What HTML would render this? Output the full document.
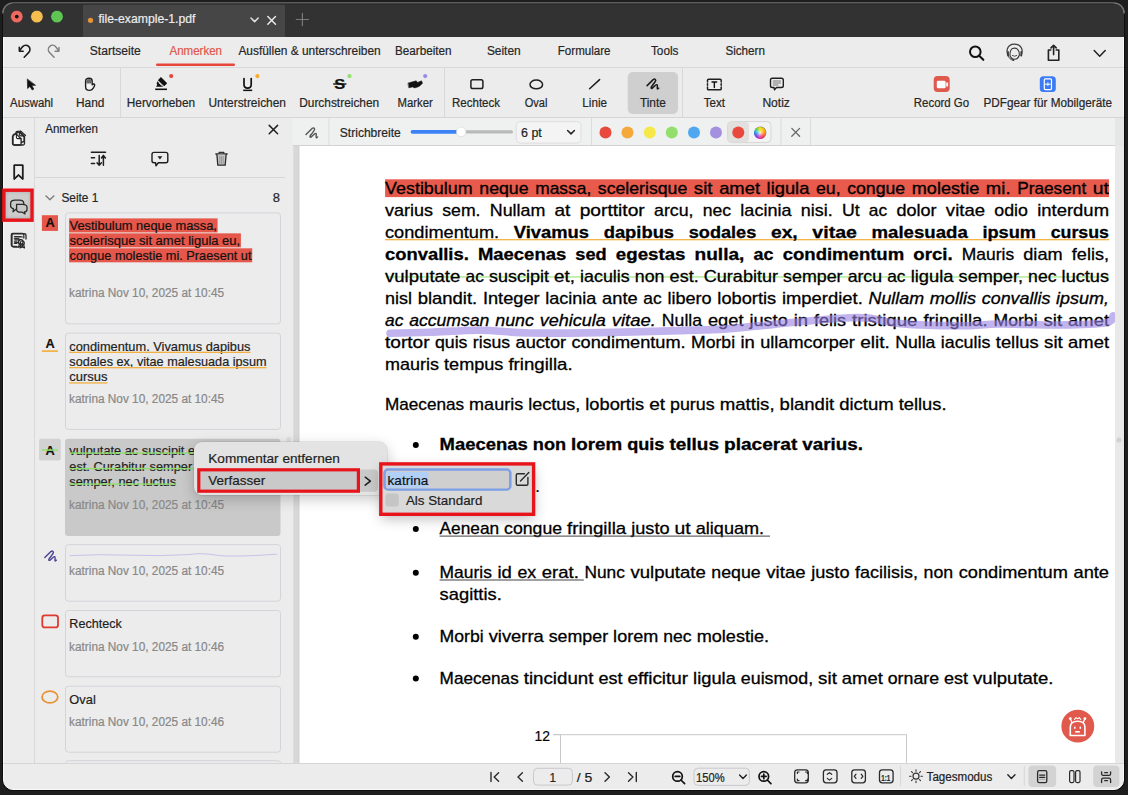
<!DOCTYPE html>
<html><head><meta charset="utf-8">
<style>
*{margin:0;padding:0;box-sizing:border-box}
html,body{width:1128px;height:795px;overflow:hidden;background:#1e1e1e;position:relative}
.L{position:absolute;left:0;top:0;overflow:visible}
text{font-family:"Liberation Sans",sans-serif;white-space:pre}
.d{position:absolute}
</style></head><body>
<svg class="L" width="1128" height="795" viewBox="0 0 1128 795"><rect x="0" y="0" width="1128" height="795" fill="#1e1e1e" /><rect x="2" y="2" width="1123" height="789" fill="#0e0e0e" rx="11" /><rect x="3.5" y="3.5" width="1120" height="786" fill="#ececec" rx="9.5" stroke="#f8f8f8" stroke-width="1" /><path d="M3 37 V13 A10 10 0 0 1 13 3 H1114 A10 10 0 0 1 1124 13 V37 Z" fill="#323232" /><path d="M2.8 13 A10.2 10.2 0 0 1 13 2.8 H1114 A10.2 10.2 0 0 1 1124.2 13" fill="none" stroke="#767676" stroke-width="1.3" stroke-linecap="round" stroke-linejoin="round" /><rect x="83" y="3.5" width="202" height="33.5" fill="#464646" /><circle cx="16.8" cy="16.6" r="6.3" fill="#ee6a5f" stroke="#252a30" stroke-width="0.7"/><circle cx="16.8" cy="16.6" r="1.9" fill="#161616"/><circle cx="36.9" cy="16.6" r="6.3" fill="#f4bf4f" stroke="#252a30" stroke-width="0.7"/><circle cx="57.0" cy="16.6" r="6.3" fill="#5fc454" stroke="#252a30" stroke-width="0.7"/><circle cx="90.5" cy="20.3" r="2.6" fill="#e8943a"/><text x="98.4" y="23.3" font-size="12.2" fill="#ececec" textLength="97" lengthAdjust="spacingAndGlyphs" stroke="#ececec" stroke-width="0.2" >file-example-1.pdf</text><path d="M251 18 L254.6 21.6 L258.2 18" fill="none" stroke="#e0e0e0" stroke-width="1.5" stroke-linecap="round" stroke-linejoin="round" /><path d="M267.8 16.5 L275.5 24.2 M275.5 16.5 L267.8 24.2" fill="none" stroke="#efefef" stroke-width="1.4" stroke-linecap="round" stroke-linejoin="round" /><path d="M302.4 13.4 V25.6 M296.3 19.5 H308.5" fill="none" stroke="#7a7a7a" stroke-width="1.2" stroke-linecap="round" stroke-linejoin="round" /><rect x="12" y="3.6" width="1102" height="0.9" fill="#242424" /><rect x="3" y="67" width="1121" height="1" fill="#d8d8d8" /><text x="89.8" y="55" font-size="12" fill="#262626" textLength="51" lengthAdjust="spacingAndGlyphs" stroke="#262626" stroke-width="0.2" >Startseite</text><text x="169.5" y="55" font-size="12" fill="#e0564a" textLength="52.5" lengthAdjust="spacingAndGlyphs" stroke="#e0564a" stroke-width="0.2" >Anmerken</text><rect x="156" y="63.5" width="79" height="2.4" fill="#e8453c" rx="1.2" /><text x="238.4" y="55" font-size="12" fill="#262626" textLength="142.3" lengthAdjust="spacingAndGlyphs" stroke="#262626" stroke-width="0.2" >Ausfüllen &amp; unterschreiben</text><text x="395" y="55" font-size="12" fill="#262626" textLength="56.6" lengthAdjust="spacingAndGlyphs" stroke="#262626" stroke-width="0.2" >Bearbeiten</text><text x="486.9" y="55" font-size="12" fill="#262626" textLength="33.8" lengthAdjust="spacingAndGlyphs" stroke="#262626" stroke-width="0.2" >Seiten</text><text x="557.8" y="55" font-size="12" fill="#262626" textLength="52.7" lengthAdjust="spacingAndGlyphs" stroke="#262626" stroke-width="0.2" >Formulare</text><text x="651" y="55" font-size="12" fill="#262626" textLength="27.4" lengthAdjust="spacingAndGlyphs" stroke="#262626" stroke-width="0.2" >Tools</text><text x="725.4" y="55" font-size="12" fill="#262626" textLength="39.6" lengthAdjust="spacingAndGlyphs" stroke="#262626" stroke-width="0.2" >Sichern</text><path d="M24.2 57.2 L28.8 52.4 A4.2 4.2 0 0 0 22.7 46.6 L19.9 50.2" fill="none" stroke="#1c1c1c" stroke-width="1.6" stroke-linecap="round" stroke-linejoin="round" /><path d="M19.3 47.4 L19.4 51.3 L23.2 51.2" fill="none" stroke="#1c1c1c" stroke-width="1.6" stroke-linecap="round" stroke-linejoin="round" /><path d="M54.1 57.2 L49.5 52.4 A4.2 4.2 0 0 1 55.6 46.6 L58.4 50.2" fill="none" stroke="#7d7d7d" stroke-width="1.4" stroke-linecap="round" stroke-linejoin="round" /><path d="M59 47.4 L58.9 51.3 L55.1 51.2" fill="none" stroke="#7d7d7d" stroke-width="1.4" stroke-linecap="round" stroke-linejoin="round" /><circle cx="975.3" cy="51.8" r="5.3" fill="none" stroke="#111" stroke-width="2"/><path d="M979.2 55.8 L983.3 59.8" fill="none" stroke="#111" stroke-width="2.1" stroke-linecap="round" stroke-linejoin="round" /><path d="M1008.2 55.5 Q1006.6 52.5 1007.2 49.5 Q1008.5 44.2 1014.6 44.2 Q1020.8 44.2 1022 49.5 Q1022.6 52.5 1021 55.5" fill="none" stroke="#3a3a3a" stroke-width="1.2" stroke-linecap="round" stroke-linejoin="round" /><path d="M1010 55.5 Q1009.8 50 1012.5 48.6 Q1015.5 47.5 1017.5 49.2 Q1019.5 50.8 1019.4 55 Q1018 59.3 1014.6 59.3 Q1011.3 59.3 1010 55.5 Z" fill="none" stroke="#3a3a3a" stroke-width="1.1" stroke-linecap="round" stroke-linejoin="round" /><path d="M1008 51.8 V55.6 M1021.3 51.8 V55.6" fill="none" stroke="#3a3a3a" stroke-width="1.8" stroke-linecap="round" stroke-linejoin="round" /><path d="M1008.4 55.6 Q1009 59.8 1013.5 60.2" fill="none" stroke="#3a3a3a" stroke-width="1" stroke-linecap="round" stroke-linejoin="round" /><circle cx="1013.4" cy="60.2" r="0.9" fill="#3a3a3a"/><path d="M1012.4 55.6 Q1014.6 57 1016.8 55.6" fill="none" stroke="#3a3a3a" stroke-width="0.9" stroke-linecap="round" stroke-linejoin="round" /><path d="M1050.8 50 H1048.4 V60.2 H1058.8 V50 H1056.2" fill="none" stroke="#222" stroke-width="1.6" stroke-linecap="round" stroke-linejoin="round" /><path d="M1053.6 54.6 V45.4 M1051 47.9 L1053.6 45.3 L1056.2 47.9" fill="none" stroke="#222" stroke-width="1.6" stroke-linecap="round" stroke-linejoin="round" /><path d="M1094.2 50.5 L1099.7 56.3 L1105.2 50.5" fill="none" stroke="#222" stroke-width="1.5" stroke-linecap="round" stroke-linejoin="round" /><rect x="3" y="117" width="1121" height="1" fill="#d6d6d6" /><rect x="120" y="68" width="1" height="49" fill="#d8d8d8" /><rect x="444" y="68" width="1" height="49" fill="#d8d8d8" /><rect x="682" y="68" width="1" height="49" fill="#d8d8d8" /><rect x="627.7" y="72" width="50.3" height="42" fill="#cfcfcf" rx="5" /><text x="10.1" y="107" font-size="12" fill="#262626" textLength="43" lengthAdjust="spacingAndGlyphs" stroke="#262626" stroke-width="0.2" >Auswahl</text><text x="76" y="107" font-size="12" fill="#262626" textLength="28.4" lengthAdjust="spacingAndGlyphs" stroke="#262626" stroke-width="0.2" >Hand</text><text x="126.8" y="107" font-size="12" fill="#262626" textLength="68.2" lengthAdjust="spacingAndGlyphs" stroke="#262626" stroke-width="0.2" >Hervorheben</text><text x="208.5" y="107" font-size="12" fill="#262626" textLength="77.5" lengthAdjust="spacingAndGlyphs" stroke="#262626" stroke-width="0.2" >Unterstreichen</text><text x="299.2" y="107" font-size="12" fill="#262626" textLength="80" lengthAdjust="spacingAndGlyphs" stroke="#262626" stroke-width="0.2" >Durchstreichen</text><text x="397.5" y="107" font-size="12" fill="#262626" textLength="35.3" lengthAdjust="spacingAndGlyphs" stroke="#262626" stroke-width="0.2" >Marker</text><text x="452" y="107" font-size="12" fill="#262626" textLength="48" lengthAdjust="spacingAndGlyphs" stroke="#262626" stroke-width="0.2" >Rechteck</text><text x="524.7" y="107" font-size="12" fill="#262626" textLength="22.7" lengthAdjust="spacingAndGlyphs" stroke="#262626" stroke-width="0.2" >Oval</text><text x="582.3" y="107" font-size="12" fill="#262626" textLength="24.7" lengthAdjust="spacingAndGlyphs" stroke="#262626" stroke-width="0.2" >Linie</text><text x="639.9" y="107" font-size="12" fill="#262626" textLength="26" lengthAdjust="spacingAndGlyphs" stroke="#262626" stroke-width="0.2" >Tinte</text><text x="703.7" y="107" font-size="12" fill="#262626" textLength="21.3" lengthAdjust="spacingAndGlyphs" stroke="#262626" stroke-width="0.2" >Text</text><text x="762.4" y="107" font-size="12" fill="#262626" textLength="27.5" lengthAdjust="spacingAndGlyphs" stroke="#262626" stroke-width="0.2" >Notiz</text><text x="913.8" y="107" font-size="12" fill="#262626" textLength="55.3" lengthAdjust="spacingAndGlyphs" stroke="#262626" stroke-width="0.2" >Record Go</text><text x="983.5" y="107" font-size="12" fill="#262626" textLength="128.5" lengthAdjust="spacingAndGlyphs" stroke="#262626" stroke-width="0.2" >PDFgear für Mobilgeräte</text><path d="M27.3 79.3 L27.6 88.6 L29.9 86.4 L32.2 90 L33.9 89 L31.7 85.5 L35.3 85.3 Z" fill="#111" stroke="#111" stroke-width="0.6" stroke-linecap="round" stroke-linejoin="round" /><path d="M85.6 85.5 V81.2 Q85.6 78.3 89.2 78.2 Q92.3 78.3 92.2 81.5 V84.9 Q93.3 83.5 94.4 84.2 Q95.1 85 94.3 86.3 Q92.5 90.4 89.3 90.4 Q85.6 90.4 85.6 86.5 Z" fill="#f4f4f4" stroke="#1f1f1f" stroke-width="1.4" stroke-linecap="round" stroke-linejoin="round" /><path d="M86.3 83.6 V81.3 Q86.3 78.9 89.2 78.9 Q91.6 78.9 91.6 81.4 V83.6 Z" fill="#6a6a6a" /><path d="M160.9 77.1 L167.2 83.2 L164.2 86.2 L157.9 80.2 Z" fill="#111" /><path d="M157.5 81.2 L163.2 86.4 L161.5 86.7 H156.1 L157.2 84.7 L156.6 83.5 Z" fill="#111" /><path d="M158.9 82.9 L161.4 85.3" fill="none" stroke="#e6e6e6" stroke-width="0.9" stroke-linecap="round" stroke-linejoin="round" /><rect x="155.2" y="88.5" width="11.8" height="1.6" fill="#111" /><circle cx="171.2" cy="76.1" r="2.1" fill="#e8493f"/><path d="M244 78.6 V84.6 Q244 88.2 247.6 88.2 Q251.2 88.2 251.2 84.6 V78.6" fill="none" stroke="#111" stroke-width="1.7" stroke-linecap="round" stroke-linejoin="round" /><rect x="243.2" y="89.6" width="9" height="1.5" fill="#111" /><circle cx="257.4" cy="76.1" r="2.1" fill="#f4ac2f"/><text x="334.2" y="89.2" font-size="15" fill="#111" textLength="11" lengthAdjust="spacingAndGlyphs" font-weight="bold" stroke="#111" stroke-width="0.2" >S</text><rect x="333.2" y="83.3" width="13.2" height="1.4" fill="#111" /><circle cx="349.5" cy="76.1" r="2.1" fill="#8ee16c"/><path d="M408.3 83 L416.2 80.8 L417.5 82.4 L421.5 80.8 L422.5 83.2 Q420.3 86 417.8 87 L414.4 87.9 L412.8 86.9 L409 87.7 Z" fill="#111" stroke="#111" stroke-width="0.5" stroke-linecap="round" stroke-linejoin="round" /><circle cx="425.2" cy="76.1" r="2.1" fill="#9e88ea"/><rect x="470.9" y="79.8" width="12" height="8.8" fill="none" rx="1.8" stroke="#1f1f1f" stroke-width="1.5" /><ellipse cx="536.3" cy="84.4" rx="6.3" ry="4.4" fill="none" stroke="#1f1f1f" stroke-width="1.5"/><path d="M589.6 88.8 L599.6 79.6" fill="none" stroke="#1f1f1f" stroke-width="1.5" stroke-linecap="round" stroke-linejoin="round" /><path transform="translate(647.1 79)" d="M0 6.6 L6.1 0.6 Q8.3 -0.8 8.6 1.4 Q8.5 2.5 4.7 7.2 Q3.1 9.6 4.9 9.4 L8.7 6 Q10.2 5 10.3 6.8 Q9.9 9.8 10.4 10 L11.6 9.2" fill="none" stroke="#1a1a1a" stroke-width="1.5" stroke-linecap="round" stroke-linejoin="round"/><path d="M707.5 82 V80.3 Q707.5 79.2 708.7 79.2 H720 Q721.2 79.2 721.2 80.3 V82 M707.5 87 V88.7 Q707.5 89.8 708.7 89.8 H720 Q721.2 89.8 721.2 88.7 V87" fill="none" stroke="#1f1f1f" stroke-width="1.5" stroke-linecap="round" stroke-linejoin="round" /><path d="M707.5 83.7 V85.3 M721.2 83.7 V85.3" fill="none" stroke="#1f1f1f" stroke-width="1.5" stroke-linecap="round" stroke-linejoin="round" /><path d="M712 82 H716.7 M714.35 82 V87.5" fill="none" stroke="#111" stroke-width="1.4" stroke-linecap="round" stroke-linejoin="round" /><path d="M772.3 78.3 H781.5 Q783.3 78.3 783.3 80.1 V85.7 Q783.3 87.5 781.5 87.5 H776.5 L774.5 89.8 L774 87.5 H772.3 Q770.5 87.5 770.5 85.7 V80.1 Q770.5 78.3 772.3 78.3 Z" fill="none" stroke="#1f1f1f" stroke-width="1.4" stroke-linecap="round" stroke-linejoin="round" /><path d="M773.3 81 H780.5 M773.3 83 H780.5 M773.3 85 H778" fill="none" stroke="#777" stroke-width="1.1" stroke-linecap="round" stroke-linejoin="round" /><rect x="933.7" y="76" width="16" height="16" fill="#e0594d" rx="4" /><rect x="936.8" y="80.8" width="8.8" height="7.4" fill="#fff" rx="1.3" /><rect x="946.2" y="82.4" width="1.9" height="4.2" fill="#fff" rx="0.5" /><rect x="1039.8" y="76.3" width="16" height="15.7" fill="#3b7cf4" rx="3.5" /><rect x="1044.3" y="78.8" width="7.2" height="10.8" fill="none" rx="1" stroke="#fff" stroke-width="1.2" /><path d="M1045.5 84.2 H1050.3 M1047.9 82.8 V85.6" fill="none" stroke="#fff" stroke-width="1" stroke-linecap="round" stroke-linejoin="round" /><rect x="34" y="118" width="1" height="645" fill="#d9d9d9" /><rect x="35" y="177" width="250" height="1" fill="#d6d6d6" /><rect x="293.6" y="118" width="5.7" height="645" fill="#d8d8d8" /><rect x="298.5" y="146" width="1" height="617" fill="#cdcdcd" /><path d="M15.9 135.5 V133 Q15.9 131.4 17.5 131.4 H19.3 L24.1 136.2 V140.4 Q24.1 142 22.5 142 H21.2" fill="none" stroke="#222" stroke-width="1.3" stroke-linecap="round" stroke-linejoin="round" /><path d="M19.3 131.6 V134.3 Q19.3 135.9 20.9 135.9 H23.8" fill="none" stroke="#222" stroke-width="1.1" stroke-linecap="round" stroke-linejoin="round" /><path d="M13 135.7 Q13 134.1 14.6 134.1 H16.4 L21.1 138.8 V143.4 Q21.1 145 19.5 145 H14.6 Q13 145 13 143.4 Z" fill="#f6f6f6" stroke="#222" stroke-width="1.3" stroke-linecap="round" stroke-linejoin="round" /><path d="M16.4 134.3 V137.2 Q16.4 138.6 17.9 138.6 H20.9" fill="none" stroke="#222" stroke-width="1.1" stroke-linecap="round" stroke-linejoin="round" /><path d="M14.3 165.3 H22.7 V179 L18.5 175 L14.3 179 Z" fill="none" stroke="#1e1e1e" stroke-width="1.5" stroke-linecap="round" stroke-linejoin="round" /><path d="M23.8 238 V234.8 Q23.8 233.4 22.4 233.4 H12.7 Q11.3 233.4 11.3 234.8 V245 Q11.3 246.4 12.7 246.4 H16.5" fill="none" stroke="#333" stroke-width="1.3" stroke-linecap="round" stroke-linejoin="round" /><path d="M14.3 236.5 H21 M14.3 238.6 H19 M14.3 241.2 H16.8 M14.3 243.4 H16.8" fill="none" stroke="#333" stroke-width="1.1" stroke-linecap="round" stroke-linejoin="round" /><circle cx="20.8" cy="241.9" r="2.3" fill="none" stroke="#222" stroke-width="1.3"/><path d="M19.4 244 L18.6 246.8 L20.8 246 L23 246.8 L22.2 244" fill="none" stroke="#222" stroke-width="1.1" stroke-linecap="round" stroke-linejoin="round" /><rect x="293.6" y="118" width="5.7" height="645" fill="#d8d8d8" /><rect x="298.5" y="146" width="1" height="617" fill="#cdcdcd" /><path d="M14.5 134.5 L18.5 131.5 L24.5 137 L24.5 143.5 Q24.5 145 23 145 H14 Q12.5 145 12.5 143.5 V136.5 Z" fill="none" stroke="#2a2a2a" stroke-width="1.3" stroke-linecap="round" stroke-linejoin="round" /><path d="M16 133.5 L20.5 131 L25.5 135.5" fill="none" stroke="#2a2a2a" stroke-width="1.3" stroke-linecap="round" stroke-linejoin="round" /><path d="M14.3 165.3 H22.7 V179 L18.5 175 L14.3 179 Z" fill="none" stroke="#1e1e1e" stroke-width="1.5" stroke-linecap="round" stroke-linejoin="round" /><path d="M244 0" fill="none" stroke="#000" stroke-width="1.5" stroke-linecap="round" stroke-linejoin="round" /><path d="M25 233.8 H13.5 Q12 233.8 12 235.3 V245.6 Q12 247 13.5 247 H19" fill="none" stroke="#2a2a2a" stroke-width="1.3" stroke-linecap="round" stroke-linejoin="round" /><path d="M25 233.8 Q26 233.8 26 235.3 V239" fill="none" stroke="#2a2a2a" stroke-width="1.3" stroke-linecap="round" stroke-linejoin="round" /><path d="M14.8 237 H22.5 M14.8 239.8 H20 M14.8 242.6 H18" fill="none" stroke="#2a2a2a" stroke-width="1.2" stroke-linecap="round" stroke-linejoin="round" /><circle cx="22.3" cy="243" r="2" fill="none" stroke="#2a2a2a" stroke-width="1.2"/><path d="M20.8 245 L20 248 L22.3 247 L24.6 248 L23.8 245" fill="none" stroke="#2a2a2a" stroke-width="1.1" stroke-linecap="round" stroke-linejoin="round" /><text x="45.2" y="132.6" font-size="12" fill="#262626" textLength="52.7" lengthAdjust="spacingAndGlyphs" stroke="#262626" stroke-width="0.2" >Anmerken</text><path d="M269.2 125.4 L277.6 133.8 M277.6 125.4 L269.2 133.8" fill="none" stroke="#222" stroke-width="1.5" stroke-linecap="round" stroke-linejoin="round" /><path d="M91.4 152.3 H105.5" fill="none" stroke="#1e1e1e" stroke-width="1.6" stroke-linecap="round" stroke-linejoin="round" /><path d="M91.4 157.8 H94.5 M91.4 163.5 H94.5" fill="none" stroke="#1e1e1e" stroke-width="1.6" stroke-linecap="round" stroke-linejoin="round" /><path d="M99.2 155.5 V165.3 M97 162.8 L99.2 165.3 L101.4 162.8" fill="none" stroke="#1e1e1e" stroke-width="1.5" stroke-linecap="round" stroke-linejoin="round" /><path d="M103.4 165.3 V155.5 M101.5 158 L103.4 155.5 L105.4 158" fill="none" stroke="#1e1e1e" stroke-width="1.5" stroke-linecap="round" stroke-linejoin="round" /><path d="M154 152.4 H165.8 Q167.8 152.4 167.8 154.4 V160.8 Q167.8 162.8 165.8 162.8 H158.3 L156 165.8 L155.6 162.8 H154 Q152 162.8 152 160.8 V154.4 Q152 152.4 154 152.4 Z" fill="none" stroke="#1e1e1e" stroke-width="1.4" stroke-linecap="round" stroke-linejoin="round" /><path d="M157.5 156.3 H162.4 L159.95 159.4 Z" fill="#1e1e1e" /><path d="M215.8 154 H227.2 M219.2 154 V152.3 H223.8 V154" fill="none" stroke="#333" stroke-width="1.3" stroke-linecap="round" stroke-linejoin="round" /><path d="M216.9 154.5 L217.8 165.2 H225.2 L226.1 154.5" fill="#c4c4c4" stroke="#2a2a2a" stroke-width="1.3" stroke-linecap="round" stroke-linejoin="round" /><path d="M219.8 156.5 V163.3 M221.5 156.5 V163.3 M223.2 156.5 V163.3" fill="none" stroke="#8a8a8a" stroke-width="0.8" stroke-linecap="round" stroke-linejoin="round" /><path d="M45.8 195.8 L49.9 199.8 L54 195.8" fill="none" stroke="#777" stroke-width="1.2" stroke-linecap="round" stroke-linejoin="round" /><text x="61.4" y="201.7" font-size="12.1" fill="#262626" textLength="37" lengthAdjust="spacingAndGlyphs" stroke="#262626" stroke-width="0.2" >Seite 1</text><text x="272.7" y="201.7" font-size="12.1" fill="#262626" textLength="7.2" lengthAdjust="spacingAndGlyphs" stroke="#262626" stroke-width="0.2" >8</text><rect x="65.5" y="212.9" width="215" height="110.99999999999997" fill="none" rx="3" stroke="#d5d3da" stroke-width="1" /><rect x="41.9" y="215.2" width="16.1" height="15.7" fill="#e5574a" /><text x="45.4" y="226.9" font-size="13.5" fill="#111" textLength="9.2" lengthAdjust="spacingAndGlyphs" font-weight="bold" stroke="#111" stroke-width="0.2" >A</text><rect x="69.1" y="218.4" width="148.5" height="14" fill="#e5574a" /><text x="69.6" y="230.20000000000002" font-size="12.6" fill="#111" textLength="147.3" lengthAdjust="spacingAndGlyphs" stroke="#111" stroke-width="0.2" >Vestibulum neque massa,</text><rect x="69.1" y="233.35" width="171.8" height="14" fill="#e5574a" /><text x="69.6" y="245.15" font-size="12.6" fill="#111" textLength="170.60000000000002" lengthAdjust="spacingAndGlyphs" stroke="#111" stroke-width="0.2" >scelerisque sit amet ligula eu,</text><rect x="69.1" y="248.3" width="183.1" height="14" fill="#e5574a" /><text x="69.6" y="260.1" font-size="12.6" fill="#111" textLength="181.9" lengthAdjust="spacingAndGlyphs" stroke="#111" stroke-width="0.2" >congue molestie mi. Praesent ut</text><text x="69.1" y="297.2" font-size="12" fill="#888888" textLength="155" lengthAdjust="spacingAndGlyphs" stroke="#888888" stroke-width="0.2" >katrina Nov 10, 2025 at 10:45</text><rect x="65.5" y="333.1" width="215" height="96.29999999999995" fill="none" rx="3" stroke="#d5d3da" stroke-width="1" /><text x="45.4" y="348.2" font-size="13.5" fill="#111" textLength="9.2" lengthAdjust="spacingAndGlyphs" font-weight="bold" stroke="#111" stroke-width="0.2" >A</text><rect x="41.9" y="350.3" width="16.1" height="1.6" fill="#f2ae3a" /><text x="69.3" y="350.8" font-size="12.6" fill="#1e1e1e" textLength="181.2" lengthAdjust="spacingAndGlyphs" stroke="#1e1e1e" stroke-width="0.2" >condimentum. Vivamus dapibus</text><rect x="69.1" y="351.7" width="181.4" height="1.3" fill="#f2b043" /><text x="69.3" y="366.1" font-size="12.6" fill="#1e1e1e" textLength="197.2" lengthAdjust="spacingAndGlyphs" stroke="#1e1e1e" stroke-width="0.2" >sodales ex, vitae malesuada ipsum</text><rect x="69.1" y="367.0" width="197.4" height="1.3" fill="#f2b043" /><text x="69.3" y="381.40000000000003" font-size="12.6" fill="#1e1e1e" textLength="38.2" lengthAdjust="spacingAndGlyphs" stroke="#1e1e1e" stroke-width="0.2" >cursus</text><rect x="69.1" y="382.3" width="38.400000000000006" height="1.3" fill="#f2b043" /><text x="69.1" y="402.9" font-size="12" fill="#888888" textLength="155" lengthAdjust="spacingAndGlyphs" stroke="#888888" stroke-width="0.2" >katrina Nov 10, 2025 at 10:45</text><rect x="65" y="438.8" width="215.5" height="97.19999999999999" fill="#c9c9c9" rx="3" /><rect x="39.1" y="438.8" width="21.7" height="21.6" fill="#d2d2d2" rx="2" /><text x="45.4" y="454.7" font-size="13.5" fill="#111" textLength="9.2" lengthAdjust="spacingAndGlyphs" font-weight="bold" stroke="#111" stroke-width="0.2" >A</text><rect x="41.9" y="449.3" width="16.1" height="1.5" fill="#8fe06b" /><text x="69.3" y="455.0" font-size="12.6" fill="#1e1e1e" textLength="196.8" lengthAdjust="spacingAndGlyphs" stroke="#1e1e1e" stroke-width="0.2" >vulputate ac suscipit et, iaculis non</text><rect x="69.1" y="452.4" width="197.00000000000003" height="1.4" fill="#8fe06b" /><text x="69.3" y="470.5" font-size="12.6" fill="#1e1e1e" textLength="201.7" lengthAdjust="spacingAndGlyphs" stroke="#1e1e1e" stroke-width="0.2" >est. Curabitur semper arcu ac ligula</text><rect x="69.1" y="467.9" width="201.9" height="1.4" fill="#8fe06b" /><text x="69.3" y="486.0" font-size="12.6" fill="#1e1e1e" textLength="106.8" lengthAdjust="spacingAndGlyphs" stroke="#1e1e1e" stroke-width="0.2" >semper, nec luctus</text><rect x="69.1" y="483.4" width="107.0" height="1.4" fill="#8fe06b" /><text x="69.1" y="509.2" font-size="12" fill="#888888" textLength="155" lengthAdjust="spacingAndGlyphs" stroke="#888888" stroke-width="0.2" >katrina Nov 10, 2025 at 10:45</text><rect x="65.5" y="544.6" width="215" height="56.60000000000002" fill="none" rx="3" stroke="#d5d3da" stroke-width="1" /><path transform="translate(44.8 551)" d="M0 6.6 L6.1 0.6 Q8.3 -0.8 8.6 1.4 Q8.5 2.5 4.7 7.2 Q3.1 9.6 4.9 9.4 L8.7 6 Q10.2 5 10.3 6.8 Q9.9 9.8 10.4 10 L11.6 9.2" fill="none" stroke="#4b4390" stroke-width="1.4" stroke-linecap="round" stroke-linejoin="round"/><path d="M70 555.6 Q100 554 130 555.2 T190 554.5 Q200 552.5 215 555 T276.5 554.2" fill="none" stroke="#c9c1ea" stroke-width="1" stroke-linecap="round" stroke-linejoin="round" /><text x="69.1" y="575" font-size="12" fill="#888888" textLength="155" lengthAdjust="spacingAndGlyphs" stroke="#888888" stroke-width="0.2" >katrina Nov 10, 2025 at 10:45</text><rect x="65.5" y="610.5" width="215" height="66.29999999999995" fill="none" rx="3" stroke="#d5d3da" stroke-width="1" /><rect x="42.3" y="615.4" width="15.7" height="12" fill="none" rx="2.5" stroke="#e0392f" stroke-width="1.8" /><text x="69.3" y="628.3" font-size="12.6" fill="#1e1e1e" textLength="52.5" lengthAdjust="spacingAndGlyphs" stroke="#1e1e1e" stroke-width="0.2" >Rechteck</text><text x="69.1" y="650.7" font-size="12" fill="#888888" textLength="155" lengthAdjust="spacingAndGlyphs" stroke="#888888" stroke-width="0.2" >katrina Nov 10, 2025 at 10:46</text><rect x="65.5" y="686.2" width="215" height="66.0" fill="none" rx="3" stroke="#d5d3da" stroke-width="1" /><ellipse cx="49.9" cy="697" rx="7.9" ry="5.8" fill="none" stroke="#ea9238" stroke-width="1.8"/><text x="69.3" y="704" font-size="12.6" fill="#1e1e1e" textLength="26.5" lengthAdjust="spacingAndGlyphs" stroke="#1e1e1e" stroke-width="0.2" >Oval</text><text x="69.1" y="726" font-size="12" fill="#888888" textLength="155" lengthAdjust="spacingAndGlyphs" stroke="#888888" stroke-width="0.2" >katrina Nov 10, 2025 at 10:46</text><rect x="65.5" y="760.7" width="215" height="4" fill="none" rx="3" stroke="#d5d3da" stroke-width="1" /><rect x="292.7" y="118" width="822.3" height="27.3" fill="#eff0f0" /><rect x="292.7" y="145" width="822.3" height="1" fill="#d2d2d2" /><rect x="328.5" y="118" width="1" height="27" fill="#dcdcdc" /><rect x="591" y="118" width="1" height="27" fill="#dcdcdc" /><rect x="780.5" y="118" width="1" height="27" fill="#dcdcdc" /><rect x="810" y="118" width="1" height="27" fill="#dcdcdc" /><rect x="1115" y="118" width="9" height="645" fill="#e6e6e6" /><path transform="translate(306 127.8)" d="M0 6.6 L6.1 0.6 Q8.3 -0.8 8.6 1.4 Q8.5 2.5 4.7 7.2 Q3.1 9.6 4.9 9.4 L8.7 6 Q10.2 5 10.3 6.8 Q9.9 9.8 10.4 10 L11.6 9.2" fill="none" stroke="#555" stroke-width="1.4" stroke-linecap="round" stroke-linejoin="round"/><text x="339.8" y="136.7" font-size="12" fill="#262626" textLength="61" lengthAdjust="spacingAndGlyphs" stroke="#262626" stroke-width="0.2" >Strichbreite</text><rect x="410.6" y="130.1" width="50" height="3.6" fill="#3b82f6" rx="1.8" /><rect x="458" y="130.3" width="55" height="3.2" fill="#b9b9b9" rx="1.6" /><circle cx="461.2" cy="131.9" r="4.8" fill="#fff" stroke="#d4d4d4" stroke-width="0.6"/><rect x="516.2" y="121.6" width="64.8" height="21.5" fill="#f4f4f4" rx="4" stroke="#d9d9d9" stroke-width="0.8" /><text x="521" y="137" font-size="12" fill="#1e1e1e" textLength="20.8" lengthAdjust="spacingAndGlyphs" stroke="#1e1e1e" stroke-width="0.2" >6 pt</text><path d="M567.6 130.5 L571 133.9 L574.4 130.5" fill="none" stroke="#222" stroke-width="1.5" stroke-linecap="round" stroke-linejoin="round" /><circle cx="605.5" cy="132.6" r="6" fill="#e8493c"/><circle cx="627.5" cy="132.6" r="6" fill="#f5a93b"/><circle cx="649.8" cy="132.6" r="6" fill="#f7e84a"/><circle cx="671.8" cy="132.6" r="6" fill="#92df6e"/><circle cx="694" cy="132.6" r="6" fill="#4fa6f1"/><circle cx="716" cy="132.6" r="6" fill="#a48fe1"/><rect x="727.5" y="121.6" width="43.5" height="21" fill="#f3f3f3" rx="4" stroke="#d6d6d6" stroke-width="1" /><rect x="727.8" y="121.9" width="21.2" height="20.4" fill="#e2dfdf" rx="4" /><circle cx="738.3" cy="132.6" r="6" fill="#e8493c"/><circle cx="760.3" cy="132.6" r="6.1" fill="#888"/><path d="M791.8 128.4 L799.6 136.2 M799.6 128.4 L791.8 136.2" fill="none" stroke="#666" stroke-width="1.3" stroke-linecap="round" stroke-linejoin="round" /></svg>
<div class="d" style="left:754.2px;top:126.5px;width:12.2px;height:12.2px;border-radius:50%;background:conic-gradient(from 0deg,#f2e200,#ff9a00 22%,#f03a3a 38%,#e02cb0 52%,#7a3ee8 62%,#2f6bf0 72%,#22c4c8 82%,#6ad83a 90%,#f2e200)"></div><div class="d" style="left:754.2px;top:126.5px;width:12.2px;height:12.2px;border-radius:50%;background:radial-gradient(circle,rgba(255,255,255,0.85) 0,rgba(255,255,255,0.3) 35%,rgba(255,255,255,0) 60%)"></div>
<svg class="L" width="1128" height="795" viewBox="0 0 1128 795"><rect x="299.5" y="146" width="815.5" height="617" fill="#ffffff" /><rect x="1115" y="146" width="8.5" height="617" fill="#e9e9e9" /><circle cx="1119" cy="440" r="2.6" fill="#d2d2d2"/><circle cx="288.7" cy="439.7" r="2.6" fill="#dedede"/><rect x="385.1" y="179.3" width="723.9" height="17.8" fill="#e85a4c" /><rect x="385" y="239.1" width="724" height="1.2" fill="#f3ac36" /><rect x="386" y="276.3" width="723" height="1.3" fill="#a4e98a" /><text x="385" y="193.7" font-size="16.6" fill="#000" textLength="87.68" lengthAdjust="spacingAndGlyphs" stroke="#000" stroke-width="0.3" >Vestibulum</text><text x="479.27" y="193.7" font-size="16.6" fill="#000" textLength="49.34" lengthAdjust="spacingAndGlyphs" stroke="#000" stroke-width="0.3" >neque</text><text x="535.2" y="193.7" font-size="16.6" fill="#000" textLength="56.06" lengthAdjust="spacingAndGlyphs" stroke="#000" stroke-width="0.3" >massa,</text><text x="597.86" y="193.7" font-size="16.6" fill="#000" textLength="89.35" lengthAdjust="spacingAndGlyphs" stroke="#000" stroke-width="0.3" >scelerisque</text><text x="693.8" y="193.7" font-size="16.6" fill="#000" textLength="18.76" lengthAdjust="spacingAndGlyphs" stroke="#000" stroke-width="0.3" >sit</text><text x="719.15" y="193.7" font-size="16.6" fill="#000" textLength="40.86" lengthAdjust="spacingAndGlyphs" stroke="#000" stroke-width="0.3" >amet</text><text x="766.6" y="193.7" font-size="16.6" fill="#000" textLength="42.76" lengthAdjust="spacingAndGlyphs" stroke="#000" stroke-width="0.3" >ligula</text><text x="815.95" y="193.7" font-size="16.6" fill="#000" textLength="24.68" lengthAdjust="spacingAndGlyphs" stroke="#000" stroke-width="0.3" >eu,</text><text x="847.22" y="193.7" font-size="16.6" fill="#000" textLength="57.95" lengthAdjust="spacingAndGlyphs" stroke="#000" stroke-width="0.3" >congue</text><text x="911.76" y="193.7" font-size="16.6" fill="#000" textLength="67.49" lengthAdjust="spacingAndGlyphs" stroke="#000" stroke-width="0.3" >molestie</text><text x="985.84" y="193.7" font-size="16.6" fill="#000" textLength="24.72" lengthAdjust="spacingAndGlyphs" stroke="#000" stroke-width="0.3" >mi.</text><text x="1017.16" y="193.7" font-size="16.6" fill="#000" textLength="69.09" lengthAdjust="spacingAndGlyphs" stroke="#000" stroke-width="0.3" >Praesent</text><text x="1092.84" y="193.7" font-size="16.6" fill="#000" textLength="16.16" lengthAdjust="spacingAndGlyphs" stroke="#000" stroke-width="0.3" >ut</text><text x="385" y="215.74" font-size="16.6" fill="#000" textLength="48.01" lengthAdjust="spacingAndGlyphs" stroke="#000" stroke-width="0.3" >varius</text><text x="442.28" y="215.74" font-size="16.6" fill="#000" textLength="38.24" lengthAdjust="spacingAndGlyphs" stroke="#000" stroke-width="0.3" >sem.</text><text x="489.79" y="215.74" font-size="16.6" fill="#000" textLength="55.51" lengthAdjust="spacingAndGlyphs" stroke="#000" stroke-width="0.3" >Nullam</text><text x="554.57" y="215.74" font-size="16.6" fill="#000" textLength="15.83" lengthAdjust="spacingAndGlyphs" stroke="#000" stroke-width="0.3" >at</text><text x="579.67" y="215.74" font-size="16.6" fill="#000" textLength="65.12" lengthAdjust="spacingAndGlyphs" stroke="#000" stroke-width="0.3" >porttitor</text><text x="654.06" y="215.74" font-size="16.6" fill="#000" textLength="39.43" lengthAdjust="spacingAndGlyphs" stroke="#000" stroke-width="0.3" >arcu,</text><text x="702.76" y="215.74" font-size="16.6" fill="#000" textLength="28.33" lengthAdjust="spacingAndGlyphs" stroke="#000" stroke-width="0.3" >nec</text><text x="740.36" y="215.74" font-size="16.6" fill="#000" textLength="51.07" lengthAdjust="spacingAndGlyphs" stroke="#000" stroke-width="0.3" >lacinia</text><text x="800.7" y="215.74" font-size="16.6" fill="#000" textLength="31.95" lengthAdjust="spacingAndGlyphs" stroke="#000" stroke-width="0.3" >nisi.</text><text x="841.92" y="215.74" font-size="16.6" fill="#000" textLength="17.7" lengthAdjust="spacingAndGlyphs" stroke="#000" stroke-width="0.3" >Ut</text><text x="868.89" y="215.74" font-size="16.6" fill="#000" textLength="18.31" lengthAdjust="spacingAndGlyphs" stroke="#000" stroke-width="0.3" >ac</text><text x="896.47" y="215.74" font-size="16.6" fill="#000" textLength="40.12" lengthAdjust="spacingAndGlyphs" stroke="#000" stroke-width="0.3" >dolor</text><text x="945.86" y="215.74" font-size="16.6" fill="#000" textLength="39.21" lengthAdjust="spacingAndGlyphs" stroke="#000" stroke-width="0.3" >vitae</text><text x="994.34" y="215.74" font-size="16.6" fill="#000" textLength="33.65" lengthAdjust="spacingAndGlyphs" stroke="#000" stroke-width="0.3" >odio</text><text x="1037.26" y="215.74" font-size="16.6" fill="#000" textLength="71.74" lengthAdjust="spacingAndGlyphs" stroke="#000" stroke-width="0.3" >interdum</text><text x="385" y="237.78" font-size="16.6" fill="#000" textLength="114.17" lengthAdjust="spacingAndGlyphs" stroke="#000" stroke-width="0.3" >condimentum.</text><text x="513.81" y="237.78" font-size="16.6" fill="#000" textLength="75.21" lengthAdjust="spacingAndGlyphs" font-weight="bold" stroke="#000" stroke-width="0.3" >Vivamus</text><text x="603.66" y="237.78" font-size="16.6" fill="#000" textLength="70.44" lengthAdjust="spacingAndGlyphs" font-weight="bold" stroke="#000" stroke-width="0.3" >dapibus</text><text x="688.73" y="237.78" font-size="16.6" fill="#000" textLength="67.55" lengthAdjust="spacingAndGlyphs" font-weight="bold" stroke="#000" stroke-width="0.3" >sodales</text><text x="770.92" y="237.78" font-size="16.6" fill="#000" textLength="26.82" lengthAdjust="spacingAndGlyphs" font-weight="bold" stroke="#000" stroke-width="0.3" >ex,</text><text x="812.39" y="237.78" font-size="16.6" fill="#000" textLength="44.5" lengthAdjust="spacingAndGlyphs" font-weight="bold" stroke="#000" stroke-width="0.3" >vitae</text><text x="871.53" y="237.78" font-size="16.6" fill="#000" textLength="96.24" lengthAdjust="spacingAndGlyphs" font-weight="bold" stroke="#000" stroke-width="0.3" >malesuada</text><text x="982.41" y="237.78" font-size="16.6" fill="#000" textLength="53.67" lengthAdjust="spacingAndGlyphs" font-weight="bold" stroke="#000" stroke-width="0.3" >ipsum</text><text x="1050.72" y="237.78" font-size="16.6" fill="#000" textLength="58.28" lengthAdjust="spacingAndGlyphs" font-weight="bold" stroke="#000" stroke-width="0.3" >cursus</text><text x="385" y="259.82" font-size="16.6" fill="#000" textLength="83.82" lengthAdjust="spacingAndGlyphs" font-weight="bold" stroke="#000" stroke-width="0.3" >convallis.</text><text x="477.98" y="259.82" font-size="16.6" fill="#000" textLength="88.22" lengthAdjust="spacingAndGlyphs" font-weight="bold" stroke="#000" stroke-width="0.3" >Maecenas</text><text x="575.36" y="259.82" font-size="16.6" fill="#000" textLength="31.33" lengthAdjust="spacingAndGlyphs" font-weight="bold" stroke="#000" stroke-width="0.3" >sed</text><text x="615.86" y="259.82" font-size="16.6" fill="#000" textLength="69.54" lengthAdjust="spacingAndGlyphs" font-weight="bold" stroke="#000" stroke-width="0.3" >egestas</text><text x="694.57" y="259.82" font-size="16.6" fill="#000" textLength="49.83" lengthAdjust="spacingAndGlyphs" font-weight="bold" stroke="#000" stroke-width="0.3" >nulla,</text><text x="753.56" y="259.82" font-size="16.6" fill="#000" textLength="19.96" lengthAdjust="spacingAndGlyphs" font-weight="bold" stroke="#000" stroke-width="0.3" >ac</text><text x="782.69" y="259.82" font-size="16.6" fill="#000" textLength="121.5" lengthAdjust="spacingAndGlyphs" font-weight="bold" stroke="#000" stroke-width="0.3" >condimentum</text><text x="913.36" y="259.82" font-size="16.6" fill="#000" textLength="39.31" lengthAdjust="spacingAndGlyphs" font-weight="bold" stroke="#000" stroke-width="0.3" >orci.</text><text x="961.83" y="259.82" font-size="16.6" fill="#000" textLength="52.28" lengthAdjust="spacingAndGlyphs" stroke="#000" stroke-width="0.3" >Mauris</text><text x="1023.27" y="259.82" font-size="16.6" fill="#000" textLength="39.37" lengthAdjust="spacingAndGlyphs" stroke="#000" stroke-width="0.3" >diam</text><text x="1071.8" y="259.82" font-size="16.6" fill="#000" textLength="37.2" lengthAdjust="spacingAndGlyphs" stroke="#000" stroke-width="0.3" >felis,</text><text x="385" y="281.86" font-size="16.6" fill="#000" textLength="75.35" lengthAdjust="spacingAndGlyphs" stroke="#000" stroke-width="0.3" >vulputate</text><text x="465.5" y="281.86" font-size="16.6" fill="#000" textLength="18.31" lengthAdjust="spacingAndGlyphs" stroke="#000" stroke-width="0.3" >ac</text><text x="488.96" y="281.86" font-size="16.6" fill="#000" textLength="59.98" lengthAdjust="spacingAndGlyphs" stroke="#000" stroke-width="0.3" >suscipit</text><text x="554.08" y="281.86" font-size="16.6" fill="#000" textLength="20.87" lengthAdjust="spacingAndGlyphs" stroke="#000" stroke-width="0.3" >et,</text><text x="580.1" y="281.86" font-size="16.6" fill="#000" textLength="49.63" lengthAdjust="spacingAndGlyphs" stroke="#000" stroke-width="0.3" >iaculis</text><text x="634.87" y="281.86" font-size="16.6" fill="#000" textLength="29.6" lengthAdjust="spacingAndGlyphs" stroke="#000" stroke-width="0.3" >non</text><text x="669.62" y="281.86" font-size="16.6" fill="#000" textLength="29.08" lengthAdjust="spacingAndGlyphs" stroke="#000" stroke-width="0.3" >est.</text><text x="703.84" y="281.86" font-size="16.6" fill="#000" textLength="74.11" lengthAdjust="spacingAndGlyphs" stroke="#000" stroke-width="0.3" >Curabitur</text><text x="783.1" y="281.86" font-size="16.6" fill="#000" textLength="59.4" lengthAdjust="spacingAndGlyphs" stroke="#000" stroke-width="0.3" >semper</text><text x="847.65" y="281.86" font-size="16.6" fill="#000" textLength="34.42" lengthAdjust="spacingAndGlyphs" stroke="#000" stroke-width="0.3" >arcu</text><text x="887.22" y="281.86" font-size="16.6" fill="#000" textLength="18.31" lengthAdjust="spacingAndGlyphs" stroke="#000" stroke-width="0.3" >ac</text><text x="910.68" y="281.86" font-size="16.6" fill="#000" textLength="42.76" lengthAdjust="spacingAndGlyphs" stroke="#000" stroke-width="0.3" >ligula</text><text x="958.59" y="281.86" font-size="16.6" fill="#000" textLength="64.41" lengthAdjust="spacingAndGlyphs" stroke="#000" stroke-width="0.3" >semper,</text><text x="1028.14" y="281.86" font-size="16.6" fill="#000" textLength="28.33" lengthAdjust="spacingAndGlyphs" stroke="#000" stroke-width="0.3" >nec</text><text x="1061.62" y="281.86" font-size="16.6" fill="#000" textLength="47.38" lengthAdjust="spacingAndGlyphs" stroke="#000" stroke-width="0.3" >luctus</text><text x="385" y="303.9" font-size="16.6" fill="#000" textLength="26.94" lengthAdjust="spacingAndGlyphs" stroke="#000" stroke-width="0.3" >nisl</text><text x="417.67" y="303.9" font-size="16.6" fill="#000" textLength="59.56" lengthAdjust="spacingAndGlyphs" stroke="#000" stroke-width="0.3" >blandit.</text><text x="482.95" y="303.9" font-size="16.6" fill="#000" textLength="56.66" lengthAdjust="spacingAndGlyphs" stroke="#000" stroke-width="0.3" >Integer</text><text x="545.34" y="303.9" font-size="16.6" fill="#000" textLength="51.07" lengthAdjust="spacingAndGlyphs" stroke="#000" stroke-width="0.3" >lacinia</text><text x="602.13" y="303.9" font-size="16.6" fill="#000" textLength="35.5" lengthAdjust="spacingAndGlyphs" stroke="#000" stroke-width="0.3" >ante</text><text x="643.36" y="303.9" font-size="16.6" fill="#000" textLength="18.31" lengthAdjust="spacingAndGlyphs" stroke="#000" stroke-width="0.3" >ac</text><text x="667.4" y="303.9" font-size="16.6" fill="#000" textLength="44.2" lengthAdjust="spacingAndGlyphs" stroke="#000" stroke-width="0.3" >libero</text><text x="717.33" y="303.9" font-size="16.6" fill="#000" textLength="58.88" lengthAdjust="spacingAndGlyphs" stroke="#000" stroke-width="0.3" >lobortis</text><text x="781.93" y="303.9" font-size="16.6" fill="#000" textLength="80.85" lengthAdjust="spacingAndGlyphs" stroke="#000" stroke-width="0.3" >imperdiet.</text><text x="868.51" y="303.9" font-size="16.6" fill="#000" textLength="55.51" lengthAdjust="spacingAndGlyphs" font-style="italic" stroke="#000" stroke-width="0.3" >Nullam</text><text x="929.74" y="303.9" font-size="16.6" fill="#000" textLength="46.31" lengthAdjust="spacingAndGlyphs" font-style="italic" stroke="#000" stroke-width="0.3" >mollis</text><text x="981.78" y="303.9" font-size="16.6" fill="#000" textLength="68.58" lengthAdjust="spacingAndGlyphs" font-style="italic" stroke="#000" stroke-width="0.3" >convallis</text><text x="1056.09" y="303.9" font-size="16.6" fill="#000" textLength="52.91" lengthAdjust="spacingAndGlyphs" font-style="italic" stroke="#000" stroke-width="0.3" >ipsum,</text><text x="385" y="325.94" font-size="16.6" fill="#000" textLength="18.31" lengthAdjust="spacingAndGlyphs" font-style="italic" stroke="#000" stroke-width="0.3" >ac</text><text x="409.22" y="325.94" font-size="16.6" fill="#000" textLength="80.14" lengthAdjust="spacingAndGlyphs" font-style="italic" stroke="#000" stroke-width="0.3" >accumsan</text><text x="495.27" y="325.94" font-size="16.6" fill="#000" textLength="38.61" lengthAdjust="spacingAndGlyphs" font-style="italic" stroke="#000" stroke-width="0.3" >nunc</text><text x="539.78" y="325.94" font-size="16.6" fill="#000" textLength="66.04" lengthAdjust="spacingAndGlyphs" font-style="italic" stroke="#000" stroke-width="0.3" >vehicula</text><text x="611.73" y="325.94" font-size="16.6" fill="#000" textLength="44.22" lengthAdjust="spacingAndGlyphs" font-style="italic" stroke="#000" stroke-width="0.3" >vitae.</text><text x="661.86" y="325.94" font-size="16.6" fill="#000" textLength="40.17" lengthAdjust="spacingAndGlyphs" stroke="#000" stroke-width="0.3" >Nulla</text><text x="707.94" y="325.94" font-size="16.6" fill="#000" textLength="35.55" lengthAdjust="spacingAndGlyphs" stroke="#000" stroke-width="0.3" >eget</text><text x="749.4" y="325.94" font-size="16.6" fill="#000" textLength="38.38" lengthAdjust="spacingAndGlyphs" stroke="#000" stroke-width="0.3" >justo</text><text x="793.69" y="325.94" font-size="16.6" fill="#000" textLength="14.36" lengthAdjust="spacingAndGlyphs" stroke="#000" stroke-width="0.3" >in</text><text x="813.95" y="325.94" font-size="16.6" fill="#000" textLength="32.19" lengthAdjust="spacingAndGlyphs" stroke="#000" stroke-width="0.3" >felis</text><text x="852.06" y="325.94" font-size="16.6" fill="#000" textLength="65.45" lengthAdjust="spacingAndGlyphs" stroke="#000" stroke-width="0.3" >tristique</text><text x="923.42" y="325.94" font-size="16.6" fill="#000" textLength="64.16" lengthAdjust="spacingAndGlyphs" stroke="#000" stroke-width="0.3" >fringilla.</text><text x="993.49" y="325.94" font-size="16.6" fill="#000" textLength="44.07" lengthAdjust="spacingAndGlyphs" stroke="#000" stroke-width="0.3" >Morbi</text><text x="1043.47" y="325.94" font-size="16.6" fill="#000" textLength="18.76" lengthAdjust="spacingAndGlyphs" stroke="#000" stroke-width="0.3" >sit</text><text x="1068.14" y="325.94" font-size="16.6" fill="#000" textLength="40.86" lengthAdjust="spacingAndGlyphs" stroke="#000" stroke-width="0.3" >amet</text><text x="385" y="347.98" font-size="16.6" fill="#000" textLength="44.57" lengthAdjust="spacingAndGlyphs" stroke="#000" stroke-width="0.3" >tortor</text><text x="434.95" y="347.98" font-size="16.6" fill="#000" textLength="32.56" lengthAdjust="spacingAndGlyphs" stroke="#000" stroke-width="0.3" >quis</text><text x="472.89" y="347.98" font-size="16.6" fill="#000" textLength="37.25" lengthAdjust="spacingAndGlyphs" stroke="#000" stroke-width="0.3" >risus</text><text x="515.52" y="347.98" font-size="16.6" fill="#000" textLength="50.58" lengthAdjust="spacingAndGlyphs" stroke="#000" stroke-width="0.3" >auctor</text><text x="571.48" y="347.98" font-size="16.6" fill="#000" textLength="114.17" lengthAdjust="spacingAndGlyphs" stroke="#000" stroke-width="0.3" >condimentum.</text><text x="691.03" y="347.98" font-size="16.6" fill="#000" textLength="44.07" lengthAdjust="spacingAndGlyphs" stroke="#000" stroke-width="0.3" >Morbi</text><text x="740.48" y="347.98" font-size="16.6" fill="#000" textLength="14.36" lengthAdjust="spacingAndGlyphs" stroke="#000" stroke-width="0.3" >in</text><text x="760.22" y="347.98" font-size="16.6" fill="#000" textLength="94.66" lengthAdjust="spacingAndGlyphs" stroke="#000" stroke-width="0.3" >ullamcorper</text><text x="860.26" y="347.98" font-size="16.6" fill="#000" textLength="29.62" lengthAdjust="spacingAndGlyphs" stroke="#000" stroke-width="0.3" >elit.</text><text x="895.27" y="347.98" font-size="16.6" fill="#000" textLength="40.17" lengthAdjust="spacingAndGlyphs" stroke="#000" stroke-width="0.3" >Nulla</text><text x="940.81" y="347.98" font-size="16.6" fill="#000" textLength="49.63" lengthAdjust="spacingAndGlyphs" stroke="#000" stroke-width="0.3" >iaculis</text><text x="995.82" y="347.98" font-size="16.6" fill="#000" textLength="42.81" lengthAdjust="spacingAndGlyphs" stroke="#000" stroke-width="0.3" >tellus</text><text x="1044.0" y="347.98" font-size="16.6" fill="#000" textLength="18.76" lengthAdjust="spacingAndGlyphs" stroke="#000" stroke-width="0.3" >sit</text><text x="1068.14" y="347.98" font-size="16.6" fill="#000" textLength="40.86" lengthAdjust="spacingAndGlyphs" stroke="#000" stroke-width="0.3" >amet</text><text x="385" y="370.02" font-size="16.6" fill="#000" textLength="54.03" lengthAdjust="spacingAndGlyphs" stroke="#000" stroke-width="0.3" >mauris</text><text x="444.04" y="370.02" font-size="16.6" fill="#000" textLength="59.39" lengthAdjust="spacingAndGlyphs" stroke="#000" stroke-width="0.3" >tempus</text><text x="508.44" y="370.02" font-size="16.6" fill="#000" textLength="64.16" lengthAdjust="spacingAndGlyphs" stroke="#000" stroke-width="0.3" >fringilla.</text><path d="M390 333.2 C396.7 333.1 415.0 332.8 430 332.3 C445.0 331.8 463.3 330.1 480 330.2 C496.7 330.3 510.0 332.6 530 333 C550.0 333.4 575.0 333.0 600 332.6 C625.0 332.2 658.3 331.3 680 330.6 C701.7 329.9 710.0 330.1 730 328.6 C750.0 327.1 780.0 323.6 800 321.8 C820.0 320.0 838.0 318.4 850 317.8 C862.0 317.2 863.7 317.5 872 318.5 C880.3 319.5 885.3 322.4 900 323.6 C914.7 324.8 943.3 325.7 960 325.8 C976.7 325.9 983.3 324.1 1000 324 C1016.7 323.9 1042.3 325.2 1060 325 C1077.7 324.8 1097.2 324.3 1106 322.8 C1114.8 321.3 1111.8 317.1 1113 316" fill="none" stroke="rgba(150,128,226,0.6)" stroke-width="7.6" stroke-linecap="round" stroke-linejoin="round" /><rect x="1115" y="300" width="8.5" height="40" fill="#e9e9e9" /><text x="385" y="410.1" font-size="16.6" fill="#000" textLength="79.12" lengthAdjust="spacingAndGlyphs" stroke="#000" stroke-width="0.3" >Maecenas</text><text x="469.13" y="410.1" font-size="16.6" fill="#000" textLength="54.03" lengthAdjust="spacingAndGlyphs" stroke="#000" stroke-width="0.3" >mauris</text><text x="528.17" y="410.1" font-size="16.6" fill="#000" textLength="52.1" lengthAdjust="spacingAndGlyphs" stroke="#000" stroke-width="0.3" >lectus,</text><text x="585.27" y="410.1" font-size="16.6" fill="#000" textLength="58.88" lengthAdjust="spacingAndGlyphs" stroke="#000" stroke-width="0.3" >lobortis</text><text x="649.15" y="410.1" font-size="16.6" fill="#000" textLength="15.87" lengthAdjust="spacingAndGlyphs" stroke="#000" stroke-width="0.3" >et</text><text x="670.02" y="410.1" font-size="16.6" fill="#000" textLength="44.64" lengthAdjust="spacingAndGlyphs" stroke="#000" stroke-width="0.3" >purus</text><text x="719.67" y="410.1" font-size="16.6" fill="#000" textLength="54.93" lengthAdjust="spacingAndGlyphs" stroke="#000" stroke-width="0.3" >mattis,</text><text x="779.61" y="410.1" font-size="16.6" fill="#000" textLength="54.56" lengthAdjust="spacingAndGlyphs" stroke="#000" stroke-width="0.3" >blandit</text><text x="839.18" y="410.1" font-size="16.6" fill="#000" textLength="54.53" lengthAdjust="spacingAndGlyphs" stroke="#000" stroke-width="0.3" >dictum</text><text x="898.72" y="410.1" font-size="16.6" fill="#000" textLength="47.81" lengthAdjust="spacingAndGlyphs" stroke="#000" stroke-width="0.3" >tellus.</text><circle cx="415.8" cy="445.0" r="3.0" fill="#000"/><circle cx="415.8" cy="486.8" r="3.0" fill="#000"/><circle cx="415.8" cy="528.9" r="3.0" fill="#000"/><circle cx="415.8" cy="572.8" r="3.0" fill="#000"/><circle cx="415.8" cy="636.6999999999999" r="3.0" fill="#000"/><circle cx="415.8" cy="678.5999999999999" r="3.0" fill="#000"/><text x="439.6" y="450.2" font-size="16.6" fill="#000" textLength="88.22" lengthAdjust="spacingAndGlyphs" font-weight="bold" stroke="#000" stroke-width="0.3" >Maecenas</text><text x="532.82" y="450.2" font-size="16.6" fill="#000" textLength="33.25" lengthAdjust="spacingAndGlyphs" font-weight="bold" stroke="#000" stroke-width="0.3" >non</text><text x="571.08" y="450.2" font-size="16.6" fill="#000" textLength="51.08" lengthAdjust="spacingAndGlyphs" font-weight="bold" stroke="#000" stroke-width="0.3" >lorem</text><text x="627.16" y="450.2" font-size="16.6" fill="#000" textLength="37.26" lengthAdjust="spacingAndGlyphs" font-weight="bold" stroke="#000" stroke-width="0.3" >quis</text><text x="669.43" y="450.2" font-size="16.6" fill="#000" textLength="49.6" lengthAdjust="spacingAndGlyphs" font-weight="bold" stroke="#000" stroke-width="0.3" >tellus</text><text x="724.03" y="450.2" font-size="16.6" fill="#000" textLength="73.24" lengthAdjust="spacingAndGlyphs" font-weight="bold" stroke="#000" stroke-width="0.3" >placerat</text><text x="802.28" y="450.2" font-size="16.6" fill="#000" textLength="60.63" lengthAdjust="spacingAndGlyphs" font-weight="bold" stroke="#000" stroke-width="0.3" >varius.</text><text x="535.2" y="492" font-size="16.6" fill="#000" stroke="#000" stroke-width="0.2" >.</text><text x="439.6" y="534.1" font-size="16.6" fill="#000" textLength="59.49" lengthAdjust="spacingAndGlyphs" stroke="#000" stroke-width="0.3" >Aenean</text><text x="504.1" y="534.1" font-size="16.6" fill="#000" textLength="57.95" lengthAdjust="spacingAndGlyphs" stroke="#000" stroke-width="0.3" >congue</text><text x="567.05" y="534.1" font-size="16.6" fill="#000" textLength="59.15" lengthAdjust="spacingAndGlyphs" stroke="#000" stroke-width="0.3" >fringilla</text><text x="631.22" y="534.1" font-size="16.6" fill="#000" textLength="38.38" lengthAdjust="spacingAndGlyphs" stroke="#000" stroke-width="0.3" >justo</text><text x="674.6" y="534.1" font-size="16.6" fill="#000" textLength="16.16" lengthAdjust="spacingAndGlyphs" stroke="#000" stroke-width="0.3" >ut</text><text x="695.76" y="534.1" font-size="16.6" fill="#000" textLength="68.38" lengthAdjust="spacingAndGlyphs" stroke="#000" stroke-width="0.3" >aliquam.</text><rect x="439.6" y="535.6" width="330.4" height="1" fill="#444" /><text x="439.6" y="578" font-size="16.6" fill="#000" textLength="52.28" lengthAdjust="spacingAndGlyphs" stroke="#000" stroke-width="0.3" >Mauris</text><text x="497.49" y="578" font-size="16.6" fill="#000" textLength="14.37" lengthAdjust="spacingAndGlyphs" stroke="#000" stroke-width="0.3" >id</text><text x="517.47" y="578" font-size="16.6" fill="#000" textLength="18.73" lengthAdjust="spacingAndGlyphs" stroke="#000" stroke-width="0.3" >ex</text><text x="541.81" y="578" font-size="16.6" fill="#000" textLength="37.0" lengthAdjust="spacingAndGlyphs" stroke="#000" stroke-width="0.3" >erat.</text><text x="584.41" y="578" font-size="16.6" fill="#000" textLength="40.41" lengthAdjust="spacingAndGlyphs" stroke="#000" stroke-width="0.3" >Nunc</text><text x="630.43" y="578" font-size="16.6" fill="#000" textLength="75.35" lengthAdjust="spacingAndGlyphs" stroke="#000" stroke-width="0.3" >vulputate</text><text x="711.38" y="578" font-size="16.6" fill="#000" textLength="49.34" lengthAdjust="spacingAndGlyphs" stroke="#000" stroke-width="0.3" >neque</text><text x="766.33" y="578" font-size="16.6" fill="#000" textLength="39.21" lengthAdjust="spacingAndGlyphs" stroke="#000" stroke-width="0.3" >vitae</text><text x="811.15" y="578" font-size="16.6" fill="#000" textLength="38.38" lengthAdjust="spacingAndGlyphs" stroke="#000" stroke-width="0.3" >justo</text><text x="855.14" y="578" font-size="16.6" fill="#000" textLength="62.78" lengthAdjust="spacingAndGlyphs" stroke="#000" stroke-width="0.3" >facilisis,</text><text x="923.52" y="578" font-size="16.6" fill="#000" textLength="29.6" lengthAdjust="spacingAndGlyphs" stroke="#000" stroke-width="0.3" >non</text><text x="958.73" y="578" font-size="16.6" fill="#000" textLength="109.17" lengthAdjust="spacingAndGlyphs" stroke="#000" stroke-width="0.3" >condimentum</text><text x="1073.5" y="578" font-size="16.6" fill="#000" textLength="35.5" lengthAdjust="spacingAndGlyphs" stroke="#000" stroke-width="0.3" >ante</text><rect x="439.6" y="579.5" width="144.19999999999993" height="1" fill="#444" /><text x="439.6" y="600.4" font-size="16.6" fill="#000" textLength="62.17" lengthAdjust="spacingAndGlyphs" stroke="#000" stroke-width="0.3" >sagittis.</text><text x="439.6" y="641.9" font-size="16.6" fill="#000" textLength="44.07" lengthAdjust="spacingAndGlyphs" stroke="#000" stroke-width="0.3" >Morbi</text><text x="488.68" y="641.9" font-size="16.6" fill="#000" textLength="55.03" lengthAdjust="spacingAndGlyphs" stroke="#000" stroke-width="0.3" >viverra</text><text x="548.72" y="641.9" font-size="16.6" fill="#000" textLength="59.4" lengthAdjust="spacingAndGlyphs" stroke="#000" stroke-width="0.3" >semper</text><text x="613.13" y="641.9" font-size="16.6" fill="#000" textLength="45.17" lengthAdjust="spacingAndGlyphs" stroke="#000" stroke-width="0.3" >lorem</text><text x="663.31" y="641.9" font-size="16.6" fill="#000" textLength="28.33" lengthAdjust="spacingAndGlyphs" stroke="#000" stroke-width="0.3" >nec</text><text x="696.65" y="641.9" font-size="16.6" fill="#000" textLength="72.5" lengthAdjust="spacingAndGlyphs" stroke="#000" stroke-width="0.3" >molestie.</text><text x="439.6" y="683.8" font-size="16.6" fill="#000" textLength="79.12" lengthAdjust="spacingAndGlyphs" stroke="#000" stroke-width="0.3" >Maecenas</text><text x="523.73" y="683.8" font-size="16.6" fill="#000" textLength="69.71" lengthAdjust="spacingAndGlyphs" stroke="#000" stroke-width="0.3" >tincidunt</text><text x="598.44" y="683.8" font-size="16.6" fill="#000" textLength="24.07" lengthAdjust="spacingAndGlyphs" stroke="#000" stroke-width="0.3" >est</text><text x="627.52" y="683.8" font-size="16.6" fill="#000" textLength="60.59" lengthAdjust="spacingAndGlyphs" stroke="#000" stroke-width="0.3" >efficitur</text><text x="693.11" y="683.8" font-size="16.6" fill="#000" textLength="42.76" lengthAdjust="spacingAndGlyphs" stroke="#000" stroke-width="0.3" >ligula</text><text x="740.87" y="683.8" font-size="16.6" fill="#000" textLength="72.24" lengthAdjust="spacingAndGlyphs" stroke="#000" stroke-width="0.3" >euismod,</text><text x="818.12" y="683.8" font-size="16.6" fill="#000" textLength="18.76" lengthAdjust="spacingAndGlyphs" stroke="#000" stroke-width="0.3" >sit</text><text x="841.88" y="683.8" font-size="16.6" fill="#000" textLength="40.86" lengthAdjust="spacingAndGlyphs" stroke="#000" stroke-width="0.3" >amet</text><text x="887.75" y="683.8" font-size="16.6" fill="#000" textLength="51.29" lengthAdjust="spacingAndGlyphs" stroke="#000" stroke-width="0.3" >ornare</text><text x="944.04" y="683.8" font-size="16.6" fill="#000" textLength="24.07" lengthAdjust="spacingAndGlyphs" stroke="#000" stroke-width="0.3" >est</text><text x="973.12" y="683.8" font-size="16.6" fill="#000" textLength="80.36" lengthAdjust="spacingAndGlyphs" stroke="#000" stroke-width="0.3" >vulputate.</text><text x="534.5" y="740.5" font-size="15" fill="#000" textLength="15.5" lengthAdjust="spacingAndGlyphs" stroke="#000" stroke-width="0.2" >12</text><rect x="553" y="734.2" width="7" height="1" fill="#bbbbbb" /><rect x="560" y="734.2" width="346.5" height="1" fill="#c9c9c9" /><rect x="560" y="734.2" width="1" height="30" fill="#c9c9c9" /><rect x="906" y="734.2" width="1" height="30" fill="#c9c9c9" /><circle cx="1077.8" cy="726.2" r="16.4" fill="#e0594c"/><path d="M1070.3 735.5 V727 Q1070.3 721.3 1077.6 721.3 Q1084.9 721.3 1084.9 727 V735.5 Z" fill="none" stroke="#fff" stroke-width="1.6" stroke-linecap="round" stroke-linejoin="round" /><path d="M1072 722.5 L1070.4 719 M1083.2 722.5 L1084.8 719" fill="none" stroke="#fff" stroke-width="1.3" stroke-linecap="round" stroke-linejoin="round" /><circle cx="1070.3" cy="718.6" r="1.4" fill="#fff"/><circle cx="1084.9" cy="718.6" r="1.4" fill="#fff"/><path d="M1074.5 719.4 L1076 717.6 L1077.6 718.8 L1079.2 717.6 L1080.7 719.4" fill="none" stroke="#fff" stroke-width="1.1" stroke-linecap="round" stroke-linejoin="round" /><rect x="1074.1" y="726.6" width="1.4" height="2.2" fill="#fff" /><rect x="1079.6" y="726.6" width="1.4" height="2.2" fill="#fff" /><rect x="1075.2" y="731" width="4.6" height="1.6" fill="#fff" /><rect x="3" y="763" width="1121" height="1" fill="#d6d6d6" /><path d="M4 764 H1123 V780 A9 9 0 0 1 1114 789 H13 A9 9 0 0 1 4 780 Z" fill="#ececec" /><rect x="35" y="763" width="258.6" height="0.8" fill="#d6d6d6" /><path d="M491 772.5 V781.5 M498.6 772.8 L494.2 777 L498.6 781.2" fill="none" stroke="#2a2a2a" stroke-width="1.4" stroke-linecap="round" stroke-linejoin="round" /><path d="M522.4 772.8 L518 777 L522.4 781.2" fill="none" stroke="#2a2a2a" stroke-width="1.4" stroke-linecap="round" stroke-linejoin="round" /><rect x="533.5" y="768.3" width="38.9" height="16.8" fill="#ececec" rx="4" stroke="#c9c9cf" stroke-width="1" /><text x="549.5" y="781.5" font-size="12" fill="#222" textLength="6.5" lengthAdjust="spacingAndGlyphs" stroke="#222" stroke-width="0.2" >1</text><text x="576.8" y="781.5" font-size="12" fill="#222" textLength="15.5" lengthAdjust="spacingAndGlyphs" stroke="#222" stroke-width="0.2" >/ 5</text><path d="M605 772.8 L609.4 777 L605 781.2" fill="none" stroke="#2a2a2a" stroke-width="1.4" stroke-linecap="round" stroke-linejoin="round" /><path d="M628.5 772.8 L632.9 777 L628.5 781.2 M636.3 772.5 V781.5" fill="none" stroke="#2a2a2a" stroke-width="1.4" stroke-linecap="round" stroke-linejoin="round" /><circle cx="677.5" cy="776.4" r="4.8" fill="none" stroke="#111" stroke-width="1.7"/><path d="M675.2 776.4 H679.8 M681 780 L684.6 783.6" fill="none" stroke="#111" stroke-width="1.7" stroke-linecap="round" stroke-linejoin="round" /><rect x="694" y="768.2" width="55.4" height="17.2" fill="#ececec" rx="4" stroke="#c9c9cf" stroke-width="1" /><text x="696" y="781.5" font-size="12" fill="#222" textLength="28.6" lengthAdjust="spacingAndGlyphs" stroke="#222" stroke-width="0.2" >150%</text><path d="M739.6 775 L743 778.4 L746.4 775" fill="none" stroke="#222" stroke-width="1.4" stroke-linecap="round" stroke-linejoin="round" /><circle cx="763.8" cy="776.4" r="4.8" fill="none" stroke="#111" stroke-width="1.7"/><path d="M761.5 776.4 H766.1 M763.8 774.1 V778.7 M767.3 780 L770.9 783.6" fill="none" stroke="#111" stroke-width="1.7" stroke-linecap="round" stroke-linejoin="round" /><rect x="794.7" y="769.8" width="13.6" height="13" fill="none" rx="2.8" stroke="#2a2a2a" stroke-width="1.3" /><rect x="823.4000000000001" y="769.8" width="13.6" height="13" fill="none" rx="2.8" stroke="#2a2a2a" stroke-width="1.3" /><rect x="851.8000000000001" y="769.8" width="13.6" height="13" fill="none" rx="2.8" stroke="#2a2a2a" stroke-width="1.3" /><rect x="879.5" y="769.8" width="13.6" height="13" fill="none" rx="2.8" stroke="#2a2a2a" stroke-width="1.3" /><path d="M797.4 773.5 V772 H799 M805.6 772 H807.4 V773.5 M807.4 779.2 V780.7 H805.6 M799 780.7 H797.4 V779.2" fill="none" stroke="#2a2a2a" stroke-width="1.2" stroke-linecap="round" stroke-linejoin="round" /><path d="M827.3 774.3 L829.5 772.6 L831.7 774.3 M827.3 778.4 L829.5 780.1 L831.7 778.4" fill="none" stroke="#2a2a2a" stroke-width="1.2" stroke-linecap="round" stroke-linejoin="round" /><path d="M856 774.2 L854.3 776.3 L856 778.4 M861.2 774.2 L862.9 776.3 L861.2 778.4" fill="none" stroke="#2a2a2a" stroke-width="1.2" stroke-linecap="round" stroke-linejoin="round" /><text x="881.2" y="780.5" font-size="8.5" fill="#2a2a2a" textLength="9" lengthAdjust="spacingAndGlyphs" font-weight="bold" stroke="#2a2a2a" stroke-width="0.2" >1:1</text><rect x="900" y="766" width="1" height="20" fill="#d6d6d6" /><circle cx="916" cy="776.2" r="3" fill="none" stroke="#333" stroke-width="1.2"/><path d="M916 769.8 V771.3 M916 781.1 V782.6 M909.6 776.2 H911.1 M920.9 776.2 H922.4 M911.5 771.7 L912.5 772.7 M919.5 779.7 L920.5 780.7 M920.5 771.7 L919.5 772.7 M912.5 779.7 L911.5 780.7" fill="none" stroke="#333" stroke-width="1.1" stroke-linecap="round" stroke-linejoin="round" /><text x="926.6" y="781" font-size="12" fill="#222" textLength="65.7" lengthAdjust="spacingAndGlyphs" stroke="#222" stroke-width="0.2" >Tagesmodus</text><path d="M1007.8 774.8 L1011.4 778.4 L1015 774.8" fill="none" stroke="#222" stroke-width="1.4" stroke-linecap="round" stroke-linejoin="round" /><rect x="1023.8" y="766" width="1" height="20" fill="#d6d6d6" /><rect x="1028.4" y="765.4" width="27.7" height="21.6" fill="#d3d3d3" rx="4" /><rect x="1037.6" y="770.6" width="9.2" height="12" fill="none" rx="1.6" stroke="#2a2a2a" stroke-width="1.3" /><path d="M1039.6 775.1 H1044.8 M1039.6 777.3 H1044.8" fill="none" stroke="#2a2a2a" stroke-width="1.2" stroke-linecap="round" stroke-linejoin="round" /><path d="M1039.6 779.3 H1044.8" fill="none" stroke="#999" stroke-width="0.8" stroke-linecap="round" stroke-linejoin="round" /><rect x="1069.6" y="770.6" width="4.4" height="12" fill="none" rx="1.5" stroke="#2a2a2a" stroke-width="1.2" /><rect x="1075.6" y="770.6" width="4.4" height="12" fill="none" rx="1.5" stroke="#2a2a2a" stroke-width="1.2" /><rect x="1093.2" y="765.4" width="26.2" height="21.6" fill="#d3d3d3" rx="4" /><path d="M1101.6 771.8 V773.8 Q1101.6 775.4 1103.2 775.4 H1109 Q1110.6 775.4 1110.6 773.8 V771.8 M1101.6 782.6 V780 Q1101.6 778.2 1103.2 778.2 H1109 Q1110.6 778.2 1110.6 780 V782.6" fill="none" stroke="#2a2a2a" stroke-width="1.3" stroke-linecap="round" stroke-linejoin="round" /><path d="M1104.6 772.6 H1107.6 M1104.6 780.6 H1107.6" fill="none" stroke="#2a2a2a" stroke-width="1.1" stroke-linecap="round" stroke-linejoin="round" /></svg>
<div class="d" style="left:4.2px;top:190.4px;width:28px;height:29.8px;background:#cdcdcd;box-shadow:inset 0 0 5px rgba(0,0,0,0.35)"></div>
<svg class="L" width="1128" height="795" viewBox="0 0 1128 795"><path d="M10.6 203.5 Q10.6 200.2 15 200.2 H19.5 Q23.8 200.2 23.8 203.5 V206 Q23.8 209.3 19.5 209.3 H16 L13 211.8 L13.5 208.8 Q10.6 208 10.6 206 Z" fill="#c8c8c8" stroke="#2a2a2a" stroke-width="1.3" stroke-linecap="round" stroke-linejoin="round" /><path d="M16.6 204.3 H22.5 Q27 204.3 27 207.3 V209.5 Q27 211.8 24.5 212 L25 214 L22.3 212.2 H20.5 Q16.6 212.2 16.6 209.5 Z" fill="#c8c8c8" stroke="#2a2a2a" stroke-width="1.3" stroke-linecap="round" stroke-linejoin="round" /><rect x="3.85" y="190.2" width="28.2" height="30" fill="none" stroke="#e8141b" stroke-width="3.4" /></svg>
<div class="d" style="left:194.3px;top:442.1px;width:192.3px;height:53.4px;border-radius:8px;background:#e3e3e3;box-shadow:0 4px 14px rgba(0,0,0,0.22),0 0 0 0.5px rgba(0,0,0,0.12)"></div>
<svg class="L" width="1128" height="795" viewBox="0 0 1128 795"><rect x="198" y="469.4" width="180" height="22.4" fill="#c9c9c9" rx="4" /><text x="208.3" y="463.3" font-size="13.5" fill="#1e1e1e" textLength="131.6" lengthAdjust="spacingAndGlyphs" stroke="#1e1e1e" stroke-width="0.2" >Kommentar entfernen</text><text x="208.3" y="485.3" font-size="13.5" fill="#1e1e1e" textLength="57" lengthAdjust="spacingAndGlyphs" stroke="#1e1e1e" stroke-width="0.2" >Verfasser</text><path d="M365.2 477.2 L370.4 481.2 L365.2 485.2" fill="none" stroke="#1e1e1e" stroke-width="1.5" stroke-linecap="round" stroke-linejoin="round" /><rect x="198.8" y="469.8" width="159.6" height="21.4" fill="none" stroke="#e8141b" stroke-width="3.2" /></svg>
<div class="d" style="left:380.5px;top:463.6px;width:153.4px;height:51px;background:#d9d9d9;box-shadow:0 4px 12px rgba(0,0,0,0.25)"></div>
<svg class="L" width="1128" height="795" viewBox="0 0 1128 795"><rect x="383.2" y="468.2" width="128.4" height="22.6" fill="#7c9fe6" rx="5" /><rect x="385.8" y="470.8" width="123.2" height="17.6" fill="#cfcfcf" rx="2" /><rect x="386.6" y="472" width="41.8" height="15.6" fill="#b2cff5" /><text x="387.6" y="485.3" font-size="13.5" fill="#111" textLength="40.6" lengthAdjust="spacingAndGlyphs" stroke="#111" stroke-width="0.2" >katrina</text><path d="M524.4 473.8 H517.6 Q516.3 473.8 516.3 475.1 V484 Q516.3 485.3 517.6 485.3 H526.6 Q527.9 485.3 527.9 484 V477.4" fill="none" stroke="#2a2a2a" stroke-width="1.4" stroke-linecap="round" stroke-linejoin="round" /><path d="M520.5 480.9 L528.8 472.6" fill="none" stroke="#2a2a2a" stroke-width="1.4" stroke-linecap="round" stroke-linejoin="round" /><rect x="385.4" y="493.4" width="13.3" height="13" fill="#c5c5c5" rx="3" /><text x="405.9" y="504.5" font-size="13.5" fill="#1e1e1e" textLength="76.6" lengthAdjust="spacingAndGlyphs" stroke="#1e1e1e" stroke-width="0.2" >Als Standard</text><rect x="380.8" y="463.9" width="152.8" height="50.4" fill="none" stroke="#e8141b" stroke-width="3.4" /></svg>
</body></html>
